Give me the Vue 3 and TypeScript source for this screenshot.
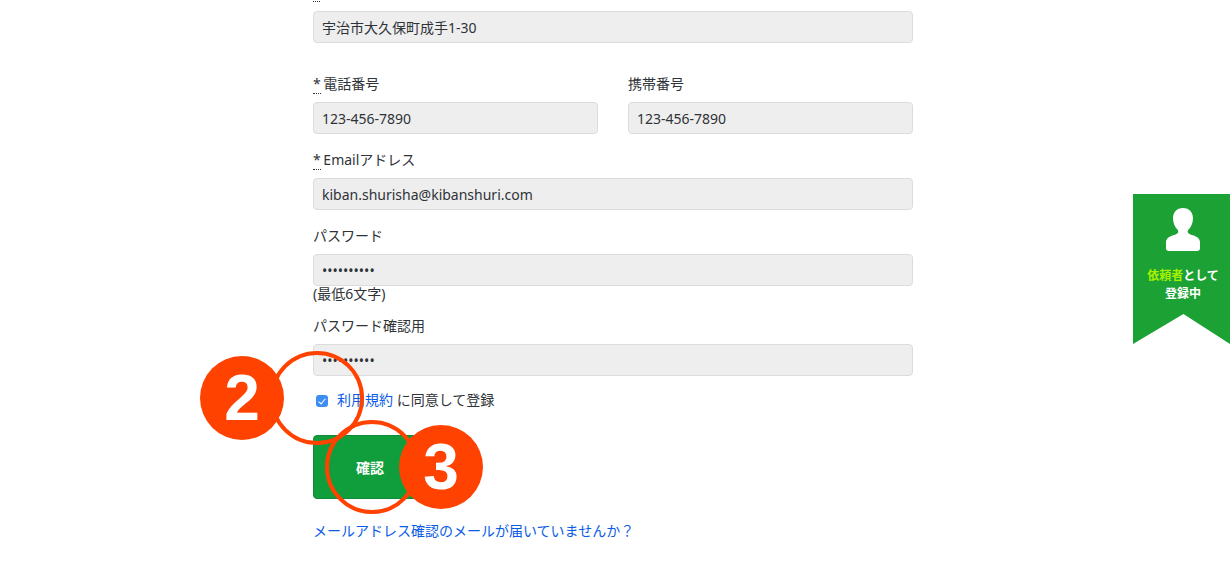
<script setup lang="ts">
const tel = '123-456-7890';
</script>

<template>
  <div class="page">
    <form class="form" @submit.prevent>
      <span class="cut-req"></span>
      <input class="field first" type="text" value="宇治市大久保町成手1-30" readonly />

      <div class="two-col">
        <div class="group">
          <label class="label"><abbr class="req">*</abbr> 電話番号</label>
          <input class="field" type="text" :value="tel" readonly />
        </div>
        <div class="group">
          <label class="label">携帯番号</label>
          <input class="field" type="text" :value="tel" readonly />
        </div>
      </div>

      <div class="group">
        <label class="label"><abbr class="req">*</abbr> Emailアドレス</label>
        <input class="field" type="text" value="kiban.shurisha@kibanshuri.com" readonly />
      </div>

      <div class="group pw">
        <label class="label">パスワード</label>
        <input class="field" type="password" value="1234567890" readonly />
        <div class="hint">(最低6文字)</div>
      </div>

      <div class="group last">
        <label class="label">パスワード確認用</label>
        <input class="field" type="password" value="1234567890" readonly />
      </div>

      <label class="agree">
        <input class="check" type="checkbox" checked />
        <span><a class="link" href="#">利用規約</a> に同意して登録</span>
      </label>

      <button class="submit" type="submit">確認</button>

      <a class="link resend" href="#">メールアドレス確認のメールが届いていませんか？</a>
    </form>

    <!-- 説明用の注釈 -->
    <div class="ring ring-2"></div>
    <div class="ring ring-3"></div>
    <div class="step step-2">2</div>
    <div class="step step-3">3</div>

    <div class="ribbon">
      <svg class="user-icon" width="34" height="44" viewBox="0 0 34 44">
        <path
          d="M17 0C10.600 0 7 4.600 7 10.500c0 4.600 2 8.600 4.400 11 1 1 1.200 2.400 .4 3.400-1 1.100-3 1.800-5.400 2.700C2.800 29 0 30.800 0 34.500V40c0 2 1 3 3 3h28c2 0 3-1 3-3v-5.500c0-3.700-2.800-5.500-6.400-6.900-2.400-.9-4.400-1.600-5.400-2.700-.8-1-.6-2.400 .4-3.400 2.400-2.400 4.400-6.400 4.400-11C27 4.600 23.400 0 17 0z"
          fill="#fff"
        />
      </svg>
      <p class="ribbon-text"><span class="accent">依頼者</span>として<br />登録中</p>
    </div>
  </div>
</template>

<style scoped>
.page {
  position: relative;
  width: 1230px;
  height: 580px;
  overflow: hidden;
  background: #fff;
  color: #2f3338;
  font-family: "Noto Sans", "Noto Sans CJK JP", sans-serif;
  font-size: 14px;
  line-height: 21px;
}

.form {
  display: flex;
  flex-direction: column;
  width: 600px;
  margin-left: 313px;
  padding-top: 11px;
}

.cut-req {
  position: absolute;
  top: 1px;
  left: 313px;
  width: 7px;
  border-bottom: 1px dotted #333;
}

.field {
  display: block;
  box-sizing: border-box;
  width: 100%;
  height: 32px;
  padding: 0 8px;
  border: 1px solid #dcdcdc;
  border-radius: 4px;
  background: #eee;
  color: #2f3338;
  font: inherit;
  outline: none;
}

.first {
  margin-bottom: 30px;
}

.two-col {
  display: grid;
  grid-template-columns: 285px 285px;
  column-gap: 30px;
}

.group {
  margin-bottom: 15px;
}

.last {
  margin-bottom: 13px;
}

.label {
  display: block;
  margin-bottom: 8px;
}

.req {
  margin-right: -1px;
  border-bottom: 1px dotted #333;
  text-decoration: none;
}

.pw {
  margin-bottom: 13px;
}

.hint {
  line-height: 16px;
}

.agree {
  display: flex;
  align-items: center;
  height: 21px;
  padding-left: 3px;
}

.check {
  position: relative;
  top: 1px;
  flex: none;
  width: 12px;
  height: 12px;
  margin: 0 9px 0 0;
  appearance: none;
  border-radius: 3px;
  background: #3d8ef2;
}

.check:checked::after {
  content: "";
  position: absolute;
  top: 2px;
  left: 4px;
  width: 3px;
  height: 6px;
  border: solid #fff;
  border-width: 0 1.5px 1.5px 0;
  transform: rotate(40deg);
}

.link {
  color: #0a5ce6;
  text-decoration: none;
}

.submit {
  width: 114px;
  height: 64px;
  margin-top: 25px;
  border: 1px solid #12893a;
  border-radius: 4px;
  background: #0f9e3b;
  color: #fff;
  font: inherit;
  font-weight: 700;
}

.resend {
  margin-top: 21px;
}

.ring {
  position: absolute;
  box-sizing: border-box;
  width: 94px;
  height: 94px;
  border: 4px solid #ff4200;
  border-radius: 50%;
}

.ring-2 {
  top: 351px;
  left: 270px;
}

.ring-3 {
  top: 420px;
  left: 325px;
}

.step {
  position: absolute;
  width: 84px;
  height: 84px;
  border-radius: 50%;
  background: #ff4200;
  color: #fff;
  font-family: "Liberation Sans", Arial, sans-serif;
  font-size: 64px;
  font-weight: 700;
  line-height: 84px;
  text-align: center;
}

.step-2 {
  top: 356px;
  left: 200px;
}

.step-3 {
  top: 425px;
  left: 399px;
}

.ribbon {
  position: absolute;
  top: 194px;
  left: 1133px;
  display: flex;
  flex-direction: column;
  align-items: center;
  width: 97px;
  height: 150px;
  padding: 14px 0 0 3px;
  box-sizing: border-box;
  background: #1ca135;
  clip-path: polygon(0 0, 100% 0, 100% 100%, 52% 120px, 0 100%);
}

.user-icon {
  display: block;
}

.ribbon-text {
  margin: 15px 0 0;
  color: #fff;
  font-size: 12px;
  font-weight: 700;
  line-height: 18px;
  text-align: center;
}

.accent {
  color: #a6f000;
}
</style>
